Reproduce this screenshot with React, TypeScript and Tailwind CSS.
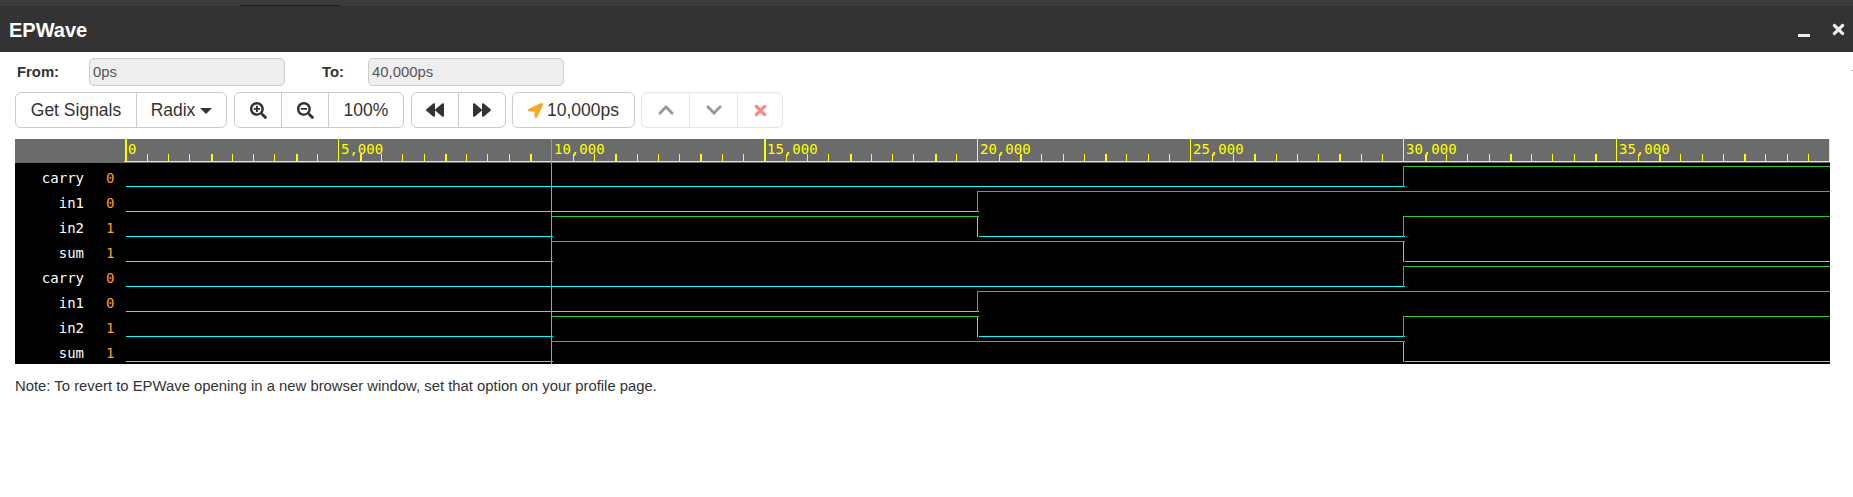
import React from "react";
import {
  FaBackward,
  FaChevronDown,
  FaChevronUp,
  FaForward,
  FaLocationArrow,
  FaSearchMinus,
  FaSearchPlus,
  FaTimes,
} from "react-icons/fa";

const SIGNALS = [
  { name: "carry", value: "0", levels: [0, 0, 0, 1] },
  { name: "in1", value: "0", levels: [0, 0, 1, 1] },
  { name: "in2", value: "1", levels: [0, 1, 0, 1] },
  { name: "sum", value: "1", levels: [0, 1, 1, 0] },
  { name: "carry", value: "0", levels: [0, 0, 0, 1] },
  { name: "in1", value: "0", levels: [0, 0, 1, 1] },
  { name: "in2", value: "1", levels: [0, 1, 0, 1] },
  { name: "sum", value: "1", levels: [0, 1, 1, 0] },
];

const GREEN = "#27c83a";
const CYAN = "#00ffff";
const YELLOW = "#ffff00";

// waveform svg starts at page x=124, y=139
const EDGES = [2, 428, 854, 1280, 1706];
const THICK_TICKS = [0, 4, 8, 11, 15, 19, 23, 27, 30, 34, 38, 42, 46, 53, 57, 61, 65, 69, 72, 76];
const TICKS = Array.from({ length: 81 }, (_, i) => i);

const tickX = (i: number) => Math.round(1.3 + i * 21.3);

const Ruler = () => (
  <g>
    {TICKS.map((i) => {
      const major = i % 10 === 0;
      const thick = THICK_TICKS.includes(i);
      const top = major ? 0 : 15;
      if (i === 20) return null; // the cursor sits here
      return (
        <rect key={i} x={tickX(i)} y={top} width={thick ? 2 : 1} height={23 - top} fill={YELLOW} />
      );
    })}
    <rect x={0} y={22} width={1706} height={1} fill={YELLOW} />
    {TICKS.filter((i) => i % 10 === 0 && i < 80).map((i) => (
      <text
        key={i}
        x={tickX(i) + 3}
        y={15}
        fill={YELLOW}
        fontSize={14}
        fontFamily="'DejaVu Sans Mono', monospace"
      >
        {(i * 500).toLocaleString("en-US")}
      </text>
    ))}
  </g>
);

const Trace = ({ levels, row }: { levels: number[]; row: number }) => {
  const high = 27.5 + row * 25;
  const low = 47.5 + row * 25;
  return (
    <g fill="none" strokeWidth={1}>
      {levels.map((level, i) => {
        const prev = i > 0 ? levels[i - 1] : level;
        const from = EDGES[i] + (i === 0 ? 0 : level ? -1 : 1);
        const to = EDGES[i + 1] + (i === 3 ? 0 : 1);
        return (
          <g key={i}>
            <path d={`M${from} ${level ? high : low}H${to}`} stroke={level ? GREEN : CYAN} />
            {prev !== level && (
              <path d={`M${EDGES[i] - 0.5} ${high}V${low}`} stroke={level ? GREEN : CYAN} />
            )}
          </g>
        );
      })}
    </g>
  );
};

const Waveform = () => (
  <svg width={1706} height={225} shapeRendering="crispEdges" className="block">
    <rect x={0} y={0} width={1706} height={24} fill="#6b6b6b" />
    <Ruler />
    {SIGNALS.map((s, row) => (
      <Trace key={row} levels={s.levels} row={row} />
    ))}
    <rect x={427} y={0} width={1} height={225} fill="#c9983f" />
  </svg>
);

const Btn = ({
  className = "",
  children,
}: {
  className?: string;
  children: React.ReactNode;
}) => (
  <div
    className={`flex h-full items-center justify-center border-r border-[#ccc] last:border-r-0 ${className}`}
  >
    {children}
  </div>
);

const BtnGroup = ({
  className = "",
  children,
}: {
  className?: string;
  children: React.ReactNode;
}) => (
  <div className={`flex h-[36px] rounded-[6px] border border-[#ccc] bg-white ${className}`}>
    {children}
  </div>
);

const App = () => {
  return (
    <div className="relative h-[497px] w-full overflow-hidden bg-white font-['Liberation_Sans',Arial,sans-serif] text-[#333]">
      <div className="h-[7px] border-b border-[#2e2e2e] bg-[#3c3c3c]" />
      <div className="absolute left-[240px] top-[5px] h-px w-[100px] bg-[#1c1c3a]" />
      <div className="flex h-[45px] items-center justify-between bg-[#333] pl-[9px] pr-[6px]">
        <span className="text-[20px] font-bold text-white">EPWave</span>
        <div className="flex items-center gap-[20px]">
          <div className="mt-[11px] h-[3px] w-[12px] bg-[#eee]" />
          <FaTimes className="text-[17px] text-[#eee]" />
        </div>
      </div>

      <div className="ml-[17px] mt-[6px] flex h-[28px] items-center text-[14.85px]">
        <span className="w-[72px] font-bold">From:</span>
        <div className="flex h-full w-[196px] items-center rounded-[5px] border border-[#ccc] bg-[#eee] pl-[3px] text-[#555]">
          0ps
        </div>
        <span className="ml-[37px] w-[46px] font-bold">To:</span>
        <div className="flex h-full w-[196px] items-center rounded-[5px] border border-[#ccc] bg-[#eee] pl-[3px] text-[#555]">
          40,000ps
        </div>
      </div>

      <div className="ml-[15px] mt-[6px] flex gap-[7px] text-[17.5px]">
        <BtnGroup>
          <Btn className="w-[121px]">Get Signals</Btn>
          <Btn className="w-[89px] gap-[5px]">
            Radix
            <span className="mt-[1px] border-x-[6px] border-t-[6px] border-x-transparent border-t-[#333]" />
          </Btn>
        </BtnGroup>
        <BtnGroup>
          <Btn className="w-[47px]">
            <FaSearchPlus className="text-[17px]" />
          </Btn>
          <Btn className="w-[47px]">
            <FaSearchMinus className="text-[17px]" />
          </Btn>
          <Btn className="w-[74px]">100%</Btn>
        </BtnGroup>
        <BtnGroup>
          <Btn className="w-[47px]">
            <FaBackward className="text-[18px]" />
          </Btn>
          <Btn className="w-[46px]">
            <FaForward className="text-[18px]" />
          </Btn>
        </BtnGroup>
        <BtnGroup className="ml-[-1px] w-[123px] items-center justify-center gap-[4px]">
          <FaLocationArrow className="text-[15px] text-[#f9a825]" />
          10,000ps
        </BtnGroup>
        <BtnGroup className="ml-[-1px] border-[#e6e6e6]">
          <Btn className="w-[48px] border-[#e6e6e6]">
            <FaChevronUp className="text-[18px] text-[#999]" />
          </Btn>
          <Btn className="w-[48px] border-[#e6e6e6]">
            <FaChevronDown className="text-[18px] text-[#999]" />
          </Btn>
          <Btn className="w-[44px]">
            <FaTimes className="text-[17px] text-[#f98585]" />
          </Btn>
        </BtnGroup>
      </div>

      <div className="ml-[15px] mt-[11px] flex h-[225px] w-[1815px] bg-black">
        <div className="w-[109px] shrink-0 font-['DejaVu_Sans_Mono',monospace] text-[14px]">
          <div className="h-[24px] bg-[#6b6b6b]" />
          <div className="pt-[3px]">
            {SIGNALS.map((s, i) => (
              <div key={i} className="flex h-[25px] items-center">
                <span className="w-[69px] text-right text-white">{s.name}</span>
                <span className="ml-[22px] text-[#ff9f1a]">{s.value}</span>
              </div>
            ))}
          </div>
        </div>
        <Waveform />
      </div>

      <p className="ml-[15px] mt-[12px] text-[14.85px] leading-[20px]">
        Note: To revert to EPWave opening in a new browser window, set that option on your profile
        page.
      </p>
      <div className="absolute right-0 top-[70px] h-px w-px bg-[#888]" />
    </div>
  );
};

export default App;
